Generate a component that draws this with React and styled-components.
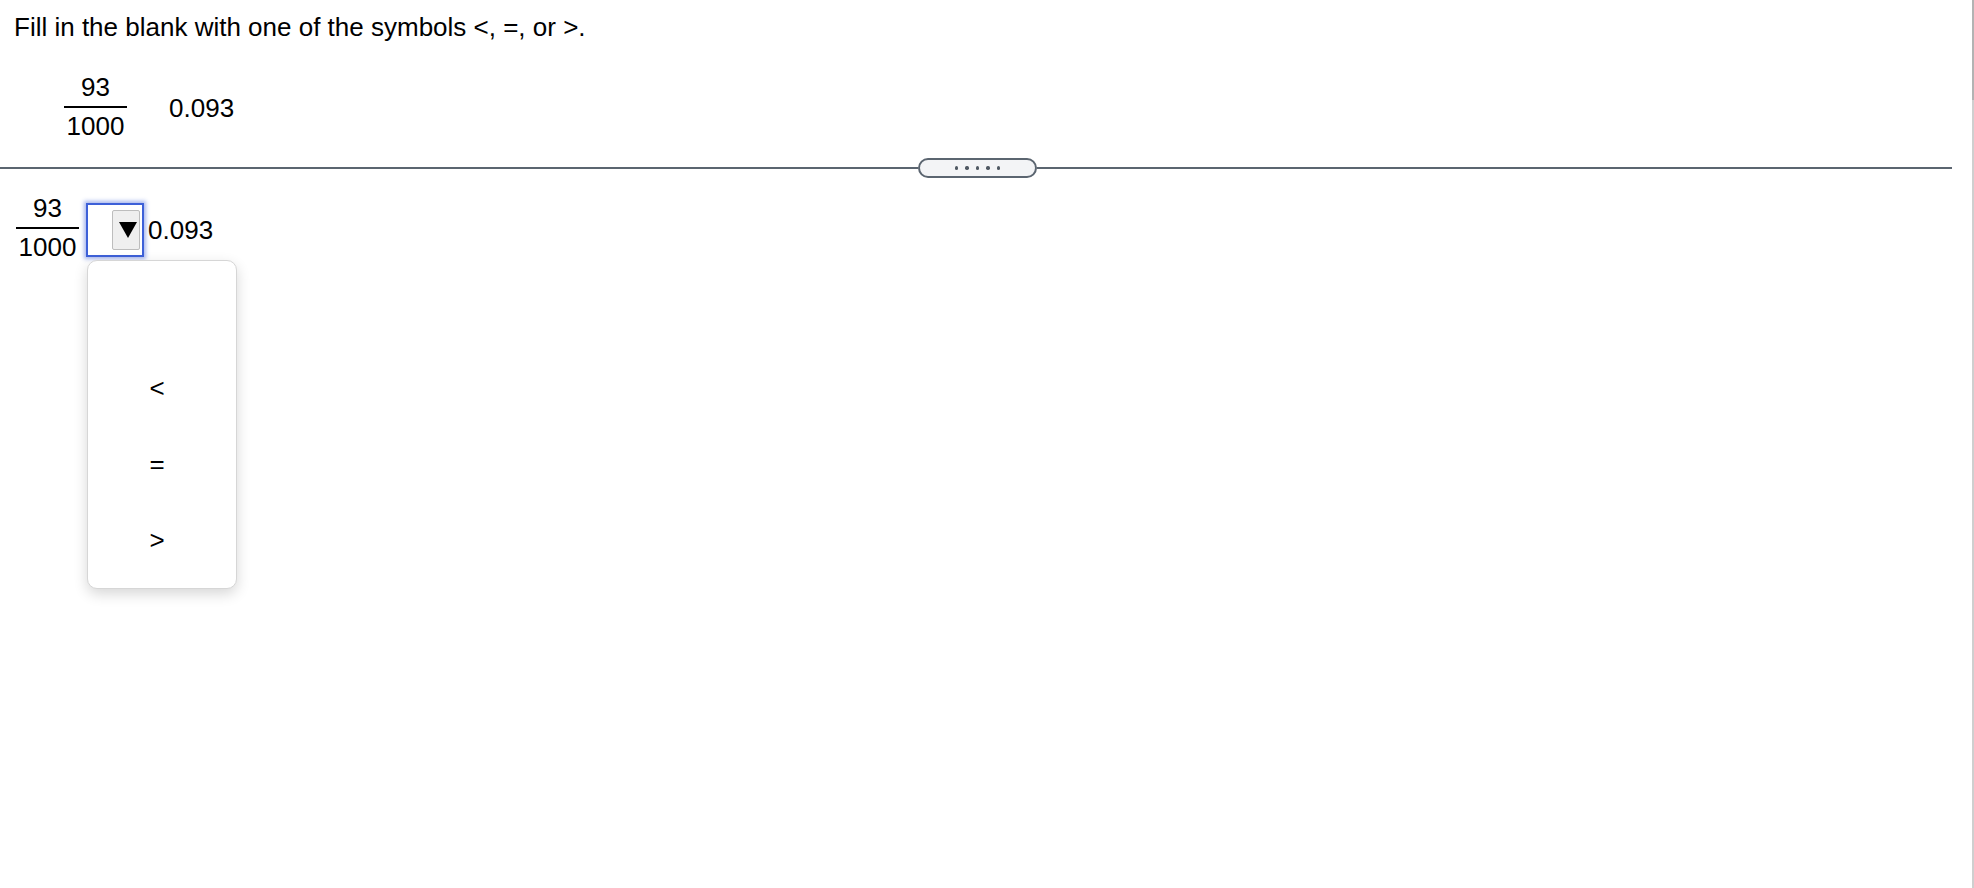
import React from 'react';
import styled, { createGlobalStyle } from 'styled-components';

const GlobalStyle = createGlobalStyle`
	html, body {
		margin: 0;
		padding: 0;
		background: #fff;
	}
	body {
		font-family: "Liberation Sans", Arial, sans-serif;
		color: #000;
	}
`;

const Page = styled.div`
	display: flex;
	min-height: 100vh;
`;

const Main = styled.main`
	flex: 0 0 1952px;
	padding-top: 12px;
	font-size: 26px;
	line-height: 30px;
`;

const Rail = styled.div`
	width: 2px;
	margin-left: auto;
	background: linear-gradient(#b3b3b3 0 100px, #cfcfcf 100px);
`;

const Prompt = styled.p`
	margin: 0;
	padding-left: 14px;
`;

const Row = styled.div`
	display: flex;
	align-items: ${(p) => p.$align || 'flex-start'};
	padding-left: ${(p) => p.$indent}px;
	margin-top: ${(p) => p.$top}px;
`;

const FractionBox = styled.div`
	display: flex;
	flex-direction: column;
	text-align: center;
	margin-bottom: ${(p) => p.$lift || 0}px;
	.num,
	.den {
		padding: 0 2.6px;
		line-height: 30px;
	}
	.bar {
		height: 2px;
		background: #000;
		margin: 4px 0 3px;
	}
`;

const Value = styled.span`
	margin-left: ${(p) => p.$left}px;
	margin-top: ${(p) => p.$top || 0}px;
	line-height: 30px;
`;

const Divider = styled.div`
	display: flex;
	align-items: center;
	height: 20px;
	margin-top: 17px;
	.line {
		height: 2px;
		background: #5b6570;
	}
	.line.left {
		flex: 0 0 918px;
	}
	.line.right {
		flex: 1;
	}
`;

const Handle = styled.div`
	box-sizing: border-box;
	width: 119px;
	height: 20px;
	border: 2px solid #5b6570;
	border-radius: 10px;
	background: #f3f4f6;
	display: flex;
	align-items: center;
	justify-content: center;
	gap: 7px;
	span {
		width: 3.4px;
		height: 3.4px;
		border-radius: 50%;
		background: #4f5862;
	}
`;

const Select = styled.div`
	position: relative;
	box-sizing: border-box;
	width: 58px;
	height: 54px;
	margin-left: 7px;
	padding-right: 2px;
	border: 2px solid #3d60d8;
	box-shadow: 0 0 4px 2px rgba(61, 96, 216, 0.45);
	background: #fff;
	display: flex;
	align-items: center;
	justify-content: flex-end;
`;

const ArrowButton = styled.div`
	box-sizing: border-box;
	width: 28px;
	height: 40px;
	background: #efefef;
	border: 1px solid #bdbdbd;
	border-radius: 2px;
	display: flex;
	align-items: center;
	justify-content: center;
	padding-left: 3px;
`;

const Menu = styled.ul`
	position: absolute;
	left: -1px;
	top: 55px;
	z-index: 10;
	box-sizing: border-box;
	width: 150px;
	height: 329px;
	margin: 0;
	padding: 13px 10px 10px 0;
	list-style: none;
	background: #fff;
	border: 1px solid #d6d6d6;
	border-radius: 10px;
	box-shadow: 0 5px 14px rgba(0, 0, 0, 0.16);
`;

const Option = styled.li`
	height: 76px;
	display: flex;
	align-items: center;
	justify-content: center;
	font-size: 26px;
	line-height: 30px;
`;

function Fraction({ num, den, lift }) {
	return (
		<FractionBox $lift={lift}>
			<span className="num">{num}</span>
			<span className="bar" />
			<span className="den">{den}</span>
		</FractionBox>
	);
}

const options = ['\u00a0', '<', '=', '>'];

export default function App() {
	return (
		<>
			<GlobalStyle />
			<Page>
				<Main>
					<Prompt>Fill in the blank with one of the symbols &lt;, =, or &gt;.</Prompt>

					<Row $indent={64} $top={30}>
						<Fraction num="93" den="1000" />
						<Value $left={42} $top={21}>0.093</Value>
					</Row>

					<Divider>
						<div className="line left" />
						<Handle>
							<span />
							<span />
							<span />
							<span />
							<span />
						</Handle>
						<div className="line right" />
					</Divider>

					<Row $indent={16} $top={15} $align="center">
						<Fraction num="93" den="1000" lift={4} />
						<Select>
							<ArrowButton>
								<svg width="18" height="16" viewBox="0 0 18 16">
									<polygon points="0,0 18,0 9,16" fill="#000" />
								</svg>
							</ArrowButton>
							<Menu>
								{options.map((o, i) => (
									<Option key={i}>{o}</Option>
								))}
							</Menu>
						</Select>
						<Value $left={4}>0.093</Value>
					</Row>
				</Main>
				<Rail />
			</Page>
		</>
	);
}
